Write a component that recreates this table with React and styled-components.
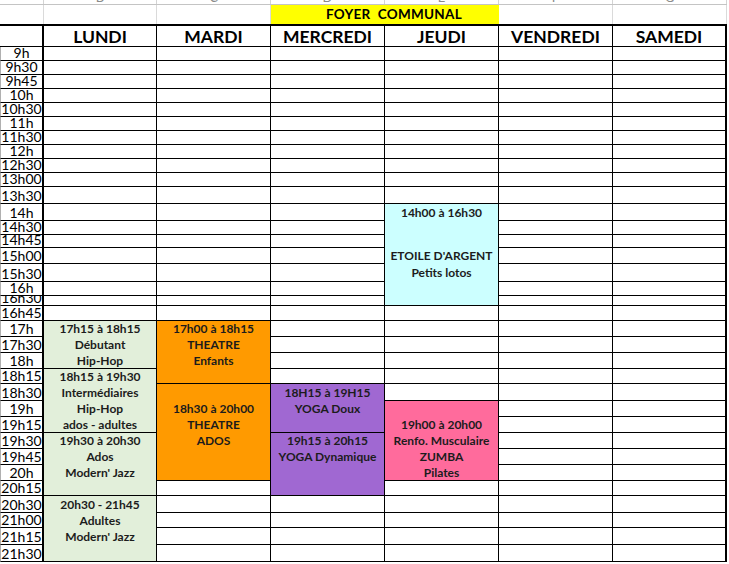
import React from 'react';
import styled, { createGlobalStyle } from 'styled-components';

const GlobalStyle = createGlobalStyle`
  html, body { margin: 0; padding: 0; background: #ffffff; }
  body { font-family: Lato, "Open Sans", "Liberation Sans", sans-serif; color: #000; }
  * { box-sizing: border-box; }
`;

const COLS = '44px 113px 114px 114px 114px 114px 114px';

const DAYS = ['LUNDI', 'MARDI', 'MERCREDI', 'JEUDI', 'VENDREDI', 'SAMEDI'];

const ROWS = [
  ['9h', 14], ['9h30', 14], ['9h45', 14], ['10h', 14], ['10h30', 14], ['11h', 14],
  ['11h30', 14], ['12h', 14], ['12h30', 14], ['13h00', 14], ['13h30', 17], ['14h', 17],
  ['14h30', 14], ['14h45', 13], ['15h00', 16], ['15h30', 18], ['16h', 14], ['16h30', 10],
  ['16h45', 15], ['17h', 16], ['17h30', 16], ['18h', 16], ['18h15', 15], ['18h30', 17],
  ['19h', 16], ['19h15', 16], ['19h30', 16], ['19h45', 16], ['20h', 16], ['20h15', 15],
  ['20h30', 17], ['21h00', 15], ['21h15', 17], ['21h30', 17],
];

const COLORS = {
  green: '#e2efda',
  orange: '#ff9a00',
  purple: '#a068d2',
  cyan: '#ccffff',
  pink: '#ff6b9c',
};

const EVENTS = [
  { day: 0, start: 19, span: 3, color: 'green', lines: ['17h15 à 18h15', 'Débutant', 'Hip-Hop'] },
  { day: 0, start: 22, span: 4, color: 'green', lines: ['18h15 à 19h30', 'Intermédiaires', 'Hip-Hop', 'ados - adultes'] },
  { day: 0, start: 26, span: 4, color: 'green', lines: ['19h30 à 20h30', 'Ados', "Modern' Jazz", ''] },
  { day: 0, start: 30, span: 4, color: 'green', lines: ['20h30 - 21h45', 'Adultes', "Modern' Jazz", ''] },
  { day: 1, start: 19, span: 4, color: 'orange', lines: ['17h00 à 18h15', 'THEATRE', 'Enfants', ''] },
  { day: 1, start: 23, span: 6, color: 'orange', lines: ['', '18h30 à 20h00', 'THEATRE', 'ADOS', '', ''] },
  { day: 2, start: 23, span: 3, color: 'purple', lines: ['18H15 à 19H15', 'YOGA Doux', ''] },
  { day: 2, start: 26, span: 4, color: 'purple', lines: ['19h15 à 20h15', 'YOGA Dynamique', '', ''] },
  { day: 3, start: 11, span: 7, color: 'cyan', lines: ['14h00 à 16h30', '', '', "ETOILE D'ARGENT", 'Petits lotos', '', ''] },
  { day: 3, start: 24, span: 5, color: 'pink', lines: ['', '19h00 à 20h00', 'Renfo. Musculaire', 'ZUMBA', 'Pilates'] },
];

const Sheet = styled.div`
  width: 727px;
`;

const LetterStrip = styled.div`
  display: grid;
  grid-template-columns: ${COLS};
  height: 5px;
  border-bottom: 1px solid #c4c4c4;
  overflow: hidden;
`;

const Letter = styled.div`
  display: flex;
  justify-content: center;
  align-items: flex-end;
  height: 4px;
  overflow: hidden;
  border-right: 1px solid #d4d4d4;
  font-size: 13px;
  line-height: 13px;
  color: #8a8a8a;
`;

const BannerRow = styled.div`
  display: grid;
  grid-template-columns: ${COLS};
  height: 19px;
`;

const BlankCell = styled.div`
  border-right: 1px solid #dadada;
`;

const Banner = styled.div`
  grid-column: 4 / span 2;
  background: #ffff00;
  display: flex;
  align-items: flex-end;
  justify-content: center;
  padding-bottom: 2px;
  padding-left: 18px;
  font-weight: 700;
  font-size: 13.5px;
  line-height: 15px;
  letter-spacing: 0.3px;
  white-space: pre;
`;

const Table = styled.div`
  display: grid;
  grid-template-columns: ${COLS};
  grid-template-rows: 23px ${ROWS.map(([, h]) => `${h}px`).join(' ')};
`;

const HeaderCell = styled.div`
  grid-column: ${(p) => p.$col};
  grid-row: 1;
  border-top: 2px solid #000;
  border-bottom: 1px solid #000;
  border-right: ${(p) => (p.$thick ? 2 : 1)}px solid #000;
  display: flex;
  align-items: center;
  justify-content: center;
  padding-top: 1px;
  font-weight: 700;
  font-size: 17.5px;
  line-height: 1;
`;

const TimeCell = styled.div`
  grid-column: 1;
  grid-row: ${(p) => p.$row};
  border-right: 2px solid #000;
  border-bottom: 1px solid #000;
  border-left: 1px solid #b0b0b0;
  display: flex;
  align-items: flex-end;
  justify-content: center;
  overflow: hidden;
  font-size: 14px;
  line-height: 14px;
  white-space: nowrap;
`;

const Cell = styled.div`
  grid-column: ${(p) => p.$col};
  grid-row: ${(p) => p.$row};
  border-right: ${(p) => (p.$thick ? 2 : 1)}px solid #000;
  border-bottom: 1px solid #000;
`;

const EventBlock = styled.div`
  grid-column: ${(p) => p.$col};
  grid-row: ${(p) => p.$row} / span ${(p) => p.$span};
  display: grid;
  grid-template-rows: subgrid;
  background: ${(p) => COLORS[p.$color]};
  border-right: 1px solid #000;
  border-bottom: 1px solid #000;
`;

const EventLine = styled.div`
  display: flex;
  align-items: center;
  justify-content: center;
  font-weight: 700;
  font-size: 12px;
  line-height: 1;
  color: #1c1c1c;
  white-space: nowrap;
`;

function covered(day, row) {
  return EVENTS.some((e) => e.day === day && row >= e.start && row < e.start + e.span);
}

export default function App() {
  const cells = [];
  ROWS.forEach((_, r) => {
    DAYS.forEach((_, d) => {
      if (!covered(d, r)) {
        cells.push(<Cell key={`c-${r}-${d}`} $col={d + 2} $row={r + 2} $thick={d === 5} />);
      }
    });
  });

  return (
    <>
      <GlobalStyle />
      <Sheet>
        <LetterStrip>
          <Letter />
          {['B', 'C', 'D', 'E', 'F', 'G'].map((l) => (
            <Letter key={l}>{l}</Letter>
          ))}
        </LetterStrip>
        <BannerRow>
          <BlankCell />
          <BlankCell />
          <BlankCell />
          <Banner>{'FOYER  COMMUNAL'}</Banner>
          <BlankCell />
          <BlankCell />
        </BannerRow>
        <Table>
          <HeaderCell $col={1} $thick />
          {DAYS.map((d, i) => (
            <HeaderCell key={d} $col={i + 2} $thick={i === 5}>
              {d}
            </HeaderCell>
          ))}
          {ROWS.map(([label], r) => (
            <TimeCell key={label} $row={r + 2}>
              {label}
            </TimeCell>
          ))}
          {cells}
          {EVENTS.map((e, i) => (
            <EventBlock key={i} $col={e.day + 2} $row={e.start + 2} $span={e.span} $color={e.color}>
              {e.lines.map((t, j) => (
                <EventLine key={j}>{t}</EventLine>
              ))}
            </EventBlock>
          ))}
        </Table>
      </Sheet>
    </>
  );
}
